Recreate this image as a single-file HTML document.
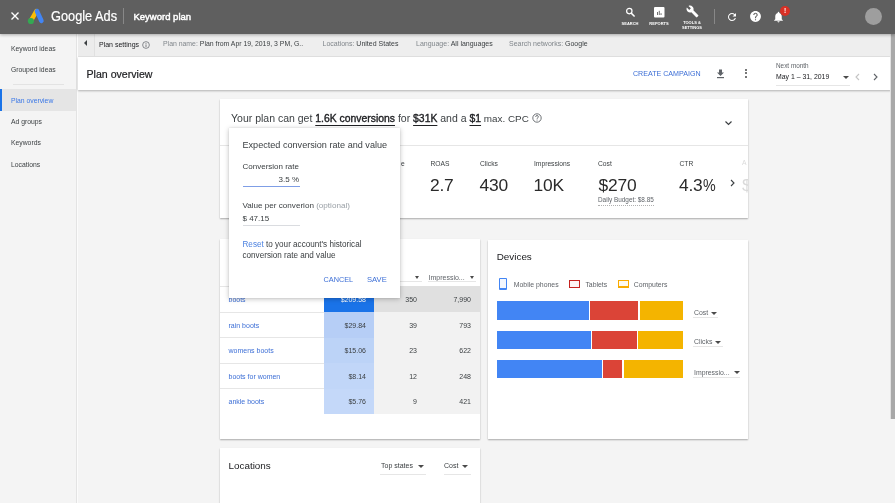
<!DOCTYPE html>
<html><head><meta charset="utf-8">
<style>
*{box-sizing:border-box;margin:0;padding:0}
body{will-change:transform}
html,body{width:895px;height:503px;overflow:hidden;background:#f4f4f4;font-family:"Liberation Sans",sans-serif;color:#202124}
.a{position:absolute;white-space:nowrap}
#hdr{position:absolute;left:0;top:0;width:895px;height:34px;background:#5f5f5f;box-shadow:0 1px 3px rgba(0,0,0,.3);z-index:5}
#hdr .t{position:absolute;color:#fff;font-weight:700;font-size:4px;line-height:5px;text-align:center}
#side{position:absolute;left:0;top:34px;width:78px;height:470px;background:#f4f4f4;border-right:1.5px solid #fbfbfb}
#side .it{position:absolute;left:11px;font-size:6.8px;line-height:8px;color:#3c4043}
#sbar{position:absolute;left:78px;top:34px;width:813px;height:23px;background:#eeeeee;border-bottom:1px solid #e3e3e3}
#sbar .t{position:absolute;top:7.5px;font-size:7px;line-height:8px;color:#3c4043}
#pobar{position:absolute;left:78px;top:57px;width:813px;height:33px;background:#fff;box-shadow:0 1px 2px rgba(0,0,0,.28)}
.card{position:absolute;background:#fff;box-shadow:0 1px 1.5px rgba(0,0,0,.3)}
#scroll{position:absolute;left:890px;top:33px;width:5px;height:386px;background:#a8a8a8;border-left:1px solid #e0e0e0}
.lbl{position:absolute;font-size:6.7px;line-height:8px;color:#3c4043}
.big{position:absolute;font-size:17.4px;line-height:18px;color:#2a2a2a;letter-spacing:-0.2px}
.kw{position:absolute;left:8.5px;font-size:7px;line-height:8px;color:#3d6fd6}
.num{position:absolute;font-size:7px;line-height:8px;color:#3c4043;text-align:right}
.card b{font-weight:400;font-size:10.4px;-webkit-text-stroke:0.35px #202124;color:#202124;text-decoration:underline;text-decoration-thickness:1px;text-underline-offset:2.5px}
.dd{position:absolute;width:0;height:0;border-left:3px solid transparent;border-right:3px solid transparent;border-top:3px solid #4a4a4a}
</style></head><body>
<div id="hdr">
  <svg class="a" style="left:10px;top:11px" width="10" height="10" viewBox="0 0 10 10"><path d="M1.5 1.5L8.5 8.5M8.5 1.5L1.5 8.5" stroke="#fff" stroke-width="1.4"/></svg>
  <svg class="a" style="left:26px;top:8px" width="20" height="18" viewBox="0 0 20 18">
    <line x1="10.4" y1="3.2" x2="5" y2="12.6" stroke="#fbbc04" stroke-width="4.5" stroke-linecap="round"/>
    <line x1="11" y1="3.2" x2="15.4" y2="12.8" stroke="#4285f4" stroke-width="4.6" stroke-linecap="round"/>
    <circle cx="4.9" cy="13" r="3.1" fill="#34a853"/>
  </svg>
  <div class="a" style="left:51px;top:8px;font-size:14.2px;line-height:16px;color:#fff;-webkit-text-stroke:0.2px #fff;transform:scaleX(0.9);transform-origin:0 0">Google Ads</div>
  <div class="a" style="left:123px;top:8px;width:1px;height:16px;background:#888"></div>
  <div class="a" style="left:133.5px;top:11.8px;font-size:9.5px;line-height:10px;color:#fff;-webkit-text-stroke:0.45px #fff">Keyword plan</div>
  <!-- search -->
  <svg class="a" style="left:624px;top:6px" width="13" height="13" viewBox="0 0 13 13"><circle cx="5.3" cy="5.1" r="2.7" fill="none" stroke="#fff" stroke-width="1.2"/><path d="M7.2 7.1L10.6 10.5" stroke="#fff" stroke-width="1.5"/></svg>
  <div class="t" style="left:615px;top:21px;width:30px">SEARCH</div>
  <svg class="a" style="left:653.5px;top:6.5px" width="11" height="11" viewBox="0 0 11 11"><rect x="0" y="0" width="10.5" height="10.5" rx="1" fill="#fff"/><rect x="3" y="5" width="0.9" height="3" fill="#5f5f5f"/><rect x="4.8" y="3.8" width="0.9" height="4.2" fill="#5f5f5f"/><rect x="6.6" y="6.2" width="0.9" height="1.8" fill="#5f5f5f"/></svg>
  <div class="t" style="left:644px;top:20.5px;width:30px">REPORTS</div>
  <svg class="a" style="left:686px;top:4.8px" width="13" height="13" viewBox="0 0 24 24"><path fill="#fff" d="M22.7 19l-9.1-9.1c.9-2.3.4-5-1.5-6.9-2-2-5-2.4-7.4-1.3L9 6 6 9 1.6 4.7C.4 7.1.9 10.1 2.9 12.1c1.9 1.9 4.6 2.4 6.9 1.5l9.1 9.1c.4.4 1 .4 1.4 0l2.3-2.3c.5-.4.5-1.1.1-1.4z"/></svg>
  <div class="t" style="left:677px;top:19.8px;width:30px">TOOLS &amp;</div>
  <div class="t" style="left:677px;top:24.8px;width:30px">SETTINGS</div>
  <div class="a" style="left:714px;top:8.5px;width:1px;height:15px;background:#888"></div>
  <!-- refresh -->
  <svg class="a" style="left:726px;top:10.5px" width="12" height="12" viewBox="0 0 24 24"><path fill="#fff" d="M17.65 6.35A7.958 7.958 0 0 0 12 4c-4.42 0-7.99 3.58-7.99 8s3.57 8 7.99 8c3.73 0 6.84-2.55 7.73-6h-2.08A5.99 5.99 0 0 1 12 18c-3.31 0-6-2.69-6-6s2.69-6 6-6c1.66 0 3.14.69 4.22 1.78L13 11h7V4l-2.35 2.35z"/></svg>
  <!-- help -->
  <svg class="a" style="left:748.5px;top:9.5px" width="13" height="13" viewBox="0 0 24 24"><path fill="#fff" d="M12 2C6.48 2 2 6.48 2 12s4.48 10 10 10 10-4.48 10-10S17.52 2 12 2zm1 17h-2v-2h2v2zm2.07-7.75l-.9.92C13.45 12.9 13 13.5 13 15h-2v-.5c0-1.1.45-2.1 1.17-2.83l1.24-1.26c.37-.36.59-.86.59-1.41 0-1.1-.9-2-2-2s-2 .9-2 2H8c0-2.21 1.79-4 4-4s4 1.79 4 4c0 .88-.36 1.68-.93 2.25z"/></svg>
  <!-- bell -->
  <svg class="a" style="left:771.5px;top:9.5px" width="13" height="14" viewBox="0 0 24 24"><path fill="#fff" d="M12 22c1.1 0 2-.9 2-2h-4c0 1.1.89 2 2 2zm6-6v-5c0-3.07-1.64-5.64-4.5-6.32V4c0-.83-.67-1.5-1.5-1.5s-1.5.67-1.5 1.5v.68C7.63 5.36 6 7.92 6 11v5l-2 2v1h16v-1l-2-2z"/></svg>
  <div class="a" style="left:780px;top:6px;width:10px;height:10px;border-radius:50%;background:#d93025"></div>
  <div class="a" style="left:780px;top:6px;width:10px;font-size:6.5px;line-height:9px;color:#fff;text-align:center;font-weight:700">!</div>
  <div class="a" style="left:865px;top:8px;width:17px;height:17px;border-radius:50%;background:#9e9e9e"></div>
</div>

<div id="side">
  <div class="it" style="top:11px">Keyword ideas</div>
  <div class="it" style="top:31.8px">Grouped ideas</div>
  <div style="position:absolute;left:13px;top:50px;width:51px;height:1px;background:#e3e3e3"></div>
  <div style="position:absolute;left:0;top:55px;width:76.5px;height:21.8px;background:#e5e5e5"></div>
  <div style="position:absolute;left:0;top:55px;width:2px;height:21.8px;background:#1a73e8"></div>
  <div style="position:absolute;left:75.5px;top:0;width:1px;height:470px;background:#e3e3e3"></div>
  <div class="it" style="top:62.5px;color:#3b78e7">Plan overview</div>
  <div class="it" style="top:84.3px">Ad groups</div>
  <div class="it" style="top:105px">Keywords</div>
  <div class="it" style="top:127px">Locations</div>
</div>

<div id="sbar">
  <div class="a" style="left:0;top:0;width:16.5px;height:22px;background:#ececec;border-right:1px solid #e0e0e0"></div>
  <div class="a" style="left:5.5px;top:5.8px;width:0;height:0;border-top:3px solid transparent;border-bottom:3px solid transparent;border-right:3.5px solid #3c4043"></div>
  <div class="t" style="left:21px;top:7px;color:#202124">Plan settings</div>
  <svg class="a" style="left:63.8px;top:7.2px" width="8" height="8" viewBox="0 0 10 10"><circle cx="5" cy="5" r="4.2" fill="none" stroke="#5f6368" stroke-width="0.9"/><rect x="4.5" y="4.3" width="1" height="3.2" fill="#5f6368"/><rect x="4.5" y="2.5" width="1" height="1" fill="#5f6368"/></svg>
  <div class="t" style="left:85px;top:5.8px;font-size:6.9px"><span style="color:#80868b">Plan name: </span>Plan from Apr 19, 2019, 3 PM, G..</div>
  <div class="t" style="left:244.5px;top:5.8px"><span style="color:#80868b">Locations: </span>United States</div>
  <div class="t" style="left:338px;top:5.8px"><span style="color:#80868b">Language: </span>All languages</div>
  <div class="t" style="left:431px;top:5.8px"><span style="color:#80868b">Search networks: </span>Google</div>
</div>

<div id="pobar">
  <div class="a" style="left:8.5px;top:11px;font-size:10.6px;line-height:12px;color:#202124;-webkit-text-stroke:0.2px #202124">Plan overview</div>
  <div class="a" style="left:555px;top:13.2px;font-size:7.1px;line-height:8px;color:#3d6fd6">CREATE CAMPAIGN</div>
  <svg class="a" style="left:637.5px;top:11.7px" width="9" height="10" viewBox="0 0 9 10"><path d="M1 3.5h2V0.5h3v3h2L4.5 7z" fill="#5f6368"/><rect x="1" y="8" width="7" height="1.2" fill="#5f6368"/></svg>
  <div class="a" style="left:666.8px;top:12px;width:2.2px;height:2.2px;border-radius:50%;background:#4a4a4a"></div>
  <div class="a" style="left:666.8px;top:15.3px;width:2.2px;height:2.2px;border-radius:50%;background:#4a4a4a"></div>
  <div class="a" style="left:666.8px;top:18.6px;width:2.2px;height:2.2px;border-radius:50%;background:#4a4a4a"></div>
  <div class="a" style="left:698px;top:5px;font-size:6.4px;line-height:8px;color:#5f6368">Next month</div>
  <div class="a" style="left:698px;top:16px;font-size:6.9px;line-height:8px;color:#202124">May 1 – 31, 2019</div>
  <div class="dd" style="left:764.5px;top:19px"></div>
  <div class="a" style="left:698px;top:28px;width:74px;height:1px;background:#e6e6e6"></div>
  <svg class="a" style="left:775.5px;top:16px" width="7" height="8" viewBox="0 0 7 8"><path d="M5 1L2 4l3 3" fill="none" stroke="#c4c4c4" stroke-width="1.1"/></svg>
  <svg class="a" style="left:794px;top:16px" width="7" height="8" viewBox="0 0 7 8"><path d="M2 1l3 3-3 3" fill="none" stroke="#5f6368" stroke-width="1.1"/></svg>
</div>

<!-- summary card -->
<div class="card" style="left:220px;top:99px;width:528px;height:119px;overflow:hidden">
  <div class="a" style="left:11px;top:13px;font-size:10.5px;line-height:12px;color:#3c4043">Your plan can get <b>1.6K conversions</b> for <b>$31K</b> and a <b>$1</b><span style="font-size:9.9px"> max. CPC</span></div>
  <svg class="a" style="left:311.5px;top:14px" width="10" height="10" viewBox="0 0 10 10"><circle cx="5" cy="5" r="4.2" fill="none" stroke="#5f6368" stroke-width="0.9"/><path d="M3.6 3.9c0-.8.6-1.4 1.4-1.4s1.4.6 1.4 1.3c0 .9-1.3 1-1.3 2" fill="none" stroke="#5f6368" stroke-width="0.9"/><rect x="4.6" y="6.6" width="0.9" height="0.9" fill="#5f6368"/></svg>
  <svg class="a" style="left:504px;top:20.5px" width="9" height="6" viewBox="0 0 9 6"><path d="M1.5 1.5l3 3 3-3" fill="none" stroke="#3c4043" stroke-width="1.2"/></svg>
  <div class="a" style="left:0;top:46px;width:528px;height:1px;background:#e6e6e6"></div>
  <div class="lbl" style="left:181px;top:61px">e</div>
  <div class="lbl" style="left:210.5px;top:61px">ROAS</div>
  <div class="big" style="left:210px;top:76.5px">2.7</div>
  <div class="lbl" style="left:260px;top:61px">Clicks</div>
  <div class="big" style="left:259.5px;top:76.5px">430</div>
  <div class="lbl" style="left:314px;top:61px">Impressions</div>
  <div class="big" style="left:313.5px;top:76.5px">10K</div>
  <div class="lbl" style="left:378px;top:61px">Cost</div>
  <div class="big" style="left:378.5px;top:76.5px">$270</div>
  <div class="a" style="left:378px;top:97px;font-size:6.4px;line-height:8px;padding-bottom:1px;color:#5f6368;border-bottom:1px dotted #b0b0b0">Daily Budget: $8.85</div>
  <div class="lbl" style="left:459.5px;top:61px">CTR</div>
  <div class="big" style="left:459px;top:76.5px">4.3<span style="display:inline-block;transform:scaleX(0.82);transform-origin:0 0">%</span></div>
  <svg class="a" style="left:509px;top:79.5px" width="7" height="8" viewBox="0 0 7 8"><path d="M2 1l3 3-3 3" fill="none" stroke="#3c4043" stroke-width="1.1"/></svg>
  <div class="lbl" style="left:522px;top:60px;color:#dadada">A</div>
  <div class="big" style="left:522px;top:76.5px;color:#dadada">$</div>
</div>

<!-- keywords card -->
<div class="card" style="left:220px;top:239px;width:260px;height:200px">
  <div class="dd" style="left:195px;top:36.5px;border-left-width:2.7px;border-right-width:2.7px;border-top-width:3px"></div>
  <div class="a" style="left:180px;top:42px;width:22px;height:1px;background:#e6e6e6"></div>
  <div class="a" style="left:208.5px;top:34.5px;font-size:7px;line-height:8px;color:#5f6368">Impressio...</div>
  <div class="dd" style="left:249.5px;top:36.5px;border-left-width:2.7px;border-right-width:2.7px;border-top-width:3px"></div>
  <div class="a" style="left:208px;top:42px;width:48px;height:1px;background:#e6e6e6"></div>
  <div class="a" style="left:154px;top:47px;width:106px;height:127.5px;background:#f2f2f2"></div>
  <div class="a" style="left:154px;top:47px;width:106px;height:26px;background:#e0e0e0"></div>
  <div class="a" style="left:103.5px;top:73px;width:50.5px;height:25.5px;background:#b6cef6"></div>
  <div class="a" style="left:103.5px;top:98.5px;width:50.5px;height:25.5px;background:#bcd3f7"></div>
  <div class="a" style="left:103.5px;top:124px;width:50.5px;height:25.5px;background:#c1d6f8"></div>
  <div class="a" style="left:103.5px;top:149.5px;width:50.5px;height:25px;background:#c4d8f9"></div>
  <div class="a" style="left:103.5px;top:47px;width:50.5px;height:26px;background:#1a73e8"></div>
  <div class="a" style="left:0;top:72.5px;width:103.5px;height:1px;background:#e6e6e6"></div>
  <div class="a" style="left:0;top:98.0px;width:103.5px;height:1px;background:#e6e6e6"></div>
  <div class="a" style="left:0;top:123.5px;width:103.5px;height:1px;background:#e6e6e6"></div>
  <div class="a" style="left:0;top:149.0px;width:103.5px;height:1px;background:#e6e6e6"></div>
  <div class="a" style="left:0;top:47px;width:103.5px;height:1px;background:#e6e6e6"></div>
  <div class="kw" style="top:57.0px">boots</div>
  <div class="num" style="left:96px;top:57.0px;width:50px;color:#fff">$209.58</div>
  <div class="num" style="left:156px;top:57.0px;width:41px">350</div>
  <div class="num" style="left:206px;top:57.0px;width:45px">7,990</div>
  <div class="kw" style="top:82.5px">rain boots</div>
  <div class="num" style="left:96px;top:82.5px;width:50px">$29.84</div>
  <div class="num" style="left:156px;top:82.5px;width:41px">39</div>
  <div class="num" style="left:206px;top:82.5px;width:45px">793</div>
  <div class="kw" style="top:108.0px">womens boots</div>
  <div class="num" style="left:96px;top:108.0px;width:50px">$15.06</div>
  <div class="num" style="left:156px;top:108.0px;width:41px">23</div>
  <div class="num" style="left:206px;top:108.0px;width:45px">622</div>
  <div class="kw" style="top:133.5px">boots for women</div>
  <div class="num" style="left:96px;top:133.5px;width:50px">$8.14</div>
  <div class="num" style="left:156px;top:133.5px;width:41px">12</div>
  <div class="num" style="left:206px;top:133.5px;width:45px">248</div>
  <div class="kw" style="top:159.0px">ankle boots</div>
  <div class="num" style="left:96px;top:159.0px;width:50px">$5.76</div>
  <div class="num" style="left:156px;top:159.0px;width:41px">9</div>
  <div class="num" style="left:206px;top:159.0px;width:45px">421</div>
</div>

<!-- devices card -->
<div class="card" style="left:488px;top:240px;width:260px;height:199px">
  <div class="a" style="left:8.7px;top:11px;font-size:9.9px;line-height:12px;color:#202124">Devices</div>
  <div class="a" style="left:11.4px;top:38.3px;width:7.4px;height:11.3px;border:1.4px solid #4285f4;border-bottom-width:2px;border-top-width:1.6px;border-radius:1px;background:#f3f7fe"></div>
  <div class="a" style="left:25.8px;top:40.5px;font-size:6.9px;line-height:8px;color:#5f6368">Mobile phones</div>
  <div class="a" style="left:80.9px;top:39.8px;width:11.4px;height:8px;border:1.5px solid #c5221f;background:#fdf3f3"></div>
  <div class="a" style="left:97.4px;top:40.5px;font-size:6.9px;line-height:8px;color:#5f6368">Tablets</div>
  <div class="a" style="left:129.8px;top:40.3px;width:11px;height:7.5px;border:1.4px solid #f9ab00;border-bottom-width:2px;background:#fefaf0"></div>
  <div class="a" style="left:145.7px;top:40.5px;font-size:6.9px;line-height:8px;color:#5f6368">Computers</div>
  <!-- bars -->
  <div class="a" style="left:9px;top:61px;width:92px;height:19px;background:#4285f4"></div>
  <div class="a" style="left:102px;top:61px;width:48.3px;height:19px;background:#db4437"></div>
  <div class="a" style="left:151.5px;top:61px;width:43.5px;height:19px;background:#f4b400"></div>
  <div class="a" style="left:9px;top:91px;width:94px;height:18px;background:#4285f4"></div>
  <div class="a" style="left:104.2px;top:91px;width:45.2px;height:18px;background:#db4437"></div>
  <div class="a" style="left:150.3px;top:91px;width:44.7px;height:18px;background:#f4b400"></div>
  <div class="a" style="left:9px;top:120px;width:105px;height:18px;background:#4285f4"></div>
  <div class="a" style="left:115.2px;top:120px;width:19.3px;height:18px;background:#db4437"></div>
  <div class="a" style="left:135.6px;top:120px;width:59.4px;height:18px;background:#f4b400"></div>
  <div class="a" style="left:206px;top:69px;font-size:6.9px;line-height:8px;color:#5f6368">Cost</div>
  <div class="dd" style="left:223px;top:71.5px"></div>
  <div class="a" style="left:205px;top:77px;width:25px;height:1px;background:#e6e6e6"></div>
  <div class="a" style="left:206px;top:98px;font-size:6.9px;line-height:8px;color:#5f6368">Clicks</div>
  <div class="dd" style="left:227px;top:100.5px"></div>
  <div class="a" style="left:205px;top:106px;width:30px;height:1px;background:#e6e6e6"></div>
  <div class="a" style="left:206px;top:128.5px;font-size:6.9px;line-height:8px;color:#5f6368">Impressio...</div>
  <div class="dd" style="left:246px;top:131px"></div>
  <div class="a" style="left:205px;top:137px;width:47px;height:1px;background:#e6e6e6"></div>
</div>

<!-- locations card -->
<div class="card" style="left:220px;top:448px;width:260px;height:60px">
  <div class="a" style="left:8.5px;top:12px;font-size:9.9px;line-height:12px;color:#202124">Locations</div>
  <div class="a" style="left:161px;top:14px;font-size:7px;line-height:8px;color:#3c4043">Top states</div>
  <div class="dd" style="left:198px;top:17px"></div>
  <div class="a" style="left:160px;top:25.5px;width:46px;height:1px;background:#e6e6e6"></div>
  <div class="a" style="left:224px;top:14px;font-size:7px;line-height:8px;color:#3c4043">Cost</div>
  <div class="dd" style="left:242px;top:17px"></div>
  <div class="a" style="left:223.5px;top:25.5px;width:27px;height:1px;background:#e6e6e6"></div>
</div>

<!-- popup -->
<div class="card" style="left:229px;top:128px;width:171px;height:170px;box-shadow:0 1px 5px rgba(0,0,0,.25),0 0 1px rgba(0,0,0,.12);z-index:3">
  <div class="a" style="left:13.5px;top:12.3px;font-size:9.1px;line-height:11px;color:#3c4043">Expected conversion rate and value</div>
  <div class="a" style="left:13.5px;top:34px;font-size:8px;line-height:9px;color:#3c4043">Conversion rate</div>
  <div class="a" style="left:13.5px;top:46.5px;width:56.5px;font-size:8px;line-height:9px;color:#3c4043;text-align:right">3.5 %</div>
  <div class="a" style="left:13.5px;top:57.5px;width:57px;height:1.2px;background:#7f9ee6"></div>
  <div class="a" style="left:13.5px;top:72.5px;font-size:8.1px;line-height:9px;color:#3c4043">Value per converion <span style="color:#9aa0a6">(optional)</span></div>
  <div class="a" style="left:13.5px;top:86px;font-size:8px;line-height:9px;color:#3c4043">$ 47.15</div>
  <div class="a" style="left:13.5px;top:97px;width:57px;height:1px;background:#dadce0"></div>
  <div class="a" style="left:13.5px;top:111px;font-size:8.15px;line-height:11px;color:#3c4043;white-space:normal;width:150px"><span style="color:#4a80e0">Reset</span> to your account's historical<br>conversion rate and value</div>
  <div class="a" style="left:94.5px;top:147px;font-size:7.3px;line-height:9px;color:#3d6fd6">CANCEL</div>
  <div class="a" style="left:138px;top:147px;font-size:7.6px;line-height:9px;color:#3d6fd6">SAVE</div>
</div>

<div id="scroll"></div>
</body></html>
